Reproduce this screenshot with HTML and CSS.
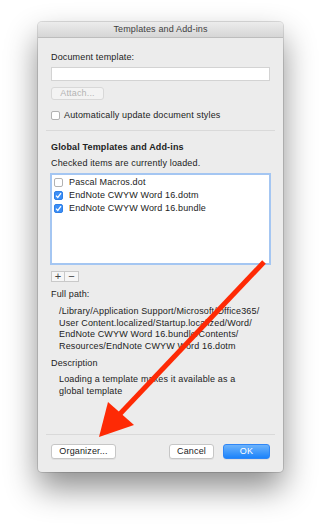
FILE: index.html
```html
<!DOCTYPE html>
<html><head>
    <meta charset="utf-8">
    <title>Templates and Add-ins</title>
    <link rel="stylesheet" href="styles.css">
</head>
<body>
    <div class="window">
        <div class="titlebar">Templates and Add-ins</div>
        <div class="content">
            <div class="label first">Document template:</div>
            <div class="field"></div>
            <div class="btn attach">Attach...</div>
            <div class="check-row">
                <span class="box"></span>
                <span>Automatically update document styles</span>
            </div>
            <div class="sep"></div>

            <div class="label bold heading">Global Templates and Add-ins</div>
            <div class="label small-gap">Checked items are currently loaded.</div>
            <div class="list">
                <div class="item"><span class="box"></span>Pascal Macros.dot</div>
                <div class="item"><span class="box on"><svg viewBox="0 0 9 9"><path d="M2 4.6 L3.8 6.5 L7 2.2" fill="none" stroke="#fff" stroke-width="1.3"/></svg></span>EndNote CWYW Word 16.dotm</div>
                <div class="item"><span class="box on"><svg viewBox="0 0 9 9"><path d="M2 4.6 L3.8 6.5 L7 2.2" fill="none" stroke="#fff" stroke-width="1.3"/></svg></span>EndNote CWYW Word 16.bundle</div>
            </div>
            <div class="plusminus">
                <span class="pm">+</span><span class="pm">&minus;</span>
            </div>

            <div class="label path-label">Full path:</div>
            <div class="path">/Library/Application Support/Microsoft/Office365/<br>User Content.localized/Startup.localized/Word/<br>EndNote CWYW Word 16.bundle/Contents/<br>Resources/EndNote CWYW Word 16.dotm</div>

            <div class="label desc-label">Description</div>
            <div class="desc">Loading a template makes it available as a<br>global template</div>

            <div class="footer">
                <div class="sep"></div>
                <div class="buttons">
                    <div class="btn organizer">Organizer...</div>
                    <div class="spacer"></div>
                    <div class="btn cancel">Cancel</div>
                    <div class="btn ok">OK</div>
                </div>
            </div>
        </div>
    </div>

    <!-- red annotation arrow -->
    <svg class="arrow" width="321" height="526" viewBox="0 0 321 526">
        <line x1="264" y1="262" x2="118" y2="416" stroke="#fe2a05" stroke-width="5"/>
        <polygon points="99,437 108,402 134,425" fill="#fe2a05"/>
    </svg>
</body></html>
```

FILE: styles.css
```css
body{
    margin:0;
    width:321px;
    height:526px;
    background:#fff;
    font-family:"Liberation Sans", Arial, sans-serif;
    font-size:9px;
    letter-spacing:0.15px;
    color:#222;
    position:relative;
    overflow:hidden;
}

.window{
    margin:22px 0 0 38px;
    width:245px;
    height:450px;
    box-sizing:border-box;
    background:#ececec;
    border-radius:4px;
    box-shadow:0 0 0 1px rgba(0,0,0,.13), 0 16px 32px rgba(0,0,0,.45);
    display:flex;
    flex-direction:column;
    overflow:hidden;
}

.titlebar{
    height:15px;
    line-height:15px;
    text-align:center;
    color:#3f3f3f;
    background:linear-gradient(#ececec,#d6d6d6);
    border-bottom:1px solid #bdbdbd;
}

.content{
    flex:1;
    padding:0 13px 13px;
    display:flex;
    flex-direction:column;
}

.label{
    line-height:12px;
}
.first{ margin-top:13px; }
.bold{ font-weight:bold; }
.heading{ margin-top:10px; }
.small-gap{ margin-top:4px; }

.field{
    margin-top:4px;
    height:14px;
    background:#fff;
    border:1px solid #d3d3d3;
    box-sizing:border-box;
}

.btn{
    box-sizing:border-box;
    background:#fff;
    border:1px solid #c6c6c6;
    border-radius:3px;
    box-shadow:0 1px 0 rgba(0,0,0,.05);
    text-align:center;
    color:#222;
}

.attach{
    margin-top:6px;
    width:53px;
    height:13px;
    line-height:11px;
    color:#b4b4b4;
    background:#f3f3f3;
    border-color:#d8d8d8;
    box-shadow:none;
}

.check-row{
    margin-top:9px;
    line-height:12px;
    display:flex;
    align-items:center;
    gap:4px;
}

.box{
    display:inline-block;
    width:9px;
    height:9px;
    box-sizing:border-box;
    background:#fff;
    border:1px solid #b2b2b2;
    border-radius:2px;
    flex:none;
}
.box.on{
    background:#3b8ef6;
    border-color:#2f7fe6;
}
.box svg{
    display:block;
    width:9px;
    height:9px;
    margin:-1px;
}

.sep{
    margin:9px -5px 0;
    height:1px;
    background:#d9d9d9;
}

.list{
    margin:4px -1px 0;
    height:92px;
    box-sizing:border-box;
    background:#fff;
    border:2px solid #a4c6f2;
    padding:1px 2px;
}
.item{
    height:13px;
    line-height:13px;
    display:flex;
    align-items:center;
    gap:6px;
}

.plusminus{
    margin-top:6px;
    display:flex;
}
.pm{
    width:14px;
    height:11px;
    box-sizing:border-box;
    border:1px solid #c9c9c9;
    background:#f6f6f6;
    line-height:9px;
    text-align:center;
    font-size:11px;
    color:#444;
}
.pm + .pm{ border-left:none; }

.path-label{ margin-top:6px; }
.path{
    margin-top:6px;
    padding-left:8px;
    line-height:11.5px;
}
.desc-label{ margin-top:5px; }
.desc{
    margin-top:4px;
    padding-left:8px;
    line-height:12px;
}

.footer{
    margin-top:auto;
}
.footer .sep{
    margin-top:0;
}
.buttons{
    margin-top:9px;
    display:flex;
    gap:9px;
}
.buttons .btn{
    height:15px;
    line-height:13px;
}
.spacer{ flex:1; }
.organizer{ width:65px; }
.cancel{ width:45px; }
.ok{
    width:47px;
    color:#fff;
    border-color:#2f86f6;
    background:linear-gradient(#6db3fb,#1b83fb);
}

.arrow{
    position:absolute;
    left:0;
    top:0;
    pointer-events:none;
}
```
